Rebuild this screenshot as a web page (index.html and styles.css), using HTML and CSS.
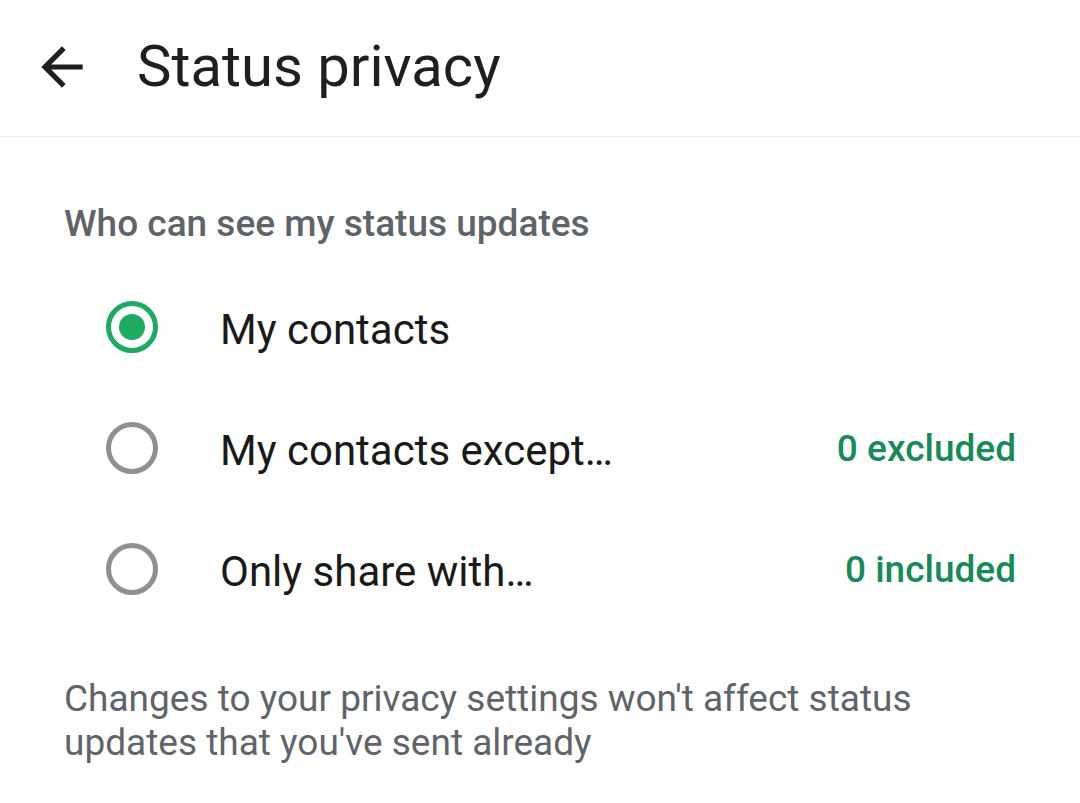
FILE: index.html
```html
<!DOCTYPE html>
<html lang="en">
<head>
<meta charset="utf-8">
<title>Status privacy</title>
<link rel="stylesheet" href="styles.css">
</head>
<body>
<header class="appbar">
  <svg class="back" viewBox="0 0 24 24" width="62" height="62" aria-hidden="true">
    <path d="M20 11H7.83l5.59-5.59L12 4l-8 8 8 8 1.41-1.41L7.83 13H20v-2z" fill="#1f1f1f"/>
  </svg>
  <h1 class="title">Status privacy</h1>
</header>
<main class="content">
  <h2 class="section-title">Who can see my status updates</h2>
  <ul class="options">
    <li class="option">
      <span class="radio checked"><span class="dot"></span></span>
      <span class="label">My contacts</span>
    </li>
    <li class="option">
      <span class="radio"></span>
      <span class="label">My contacts except…</span>
      <span class="count">0 excluded</span>
    </li>
    <li class="option">
      <span class="radio"></span>
      <span class="label">Only share with…</span>
      <span class="count">0 included</span>
    </li>
  </ul>
  <p class="note">Changes to your privacy settings won't affect status updates that you've sent already</p>
</main>
</body>
</html>
```
FILE: styles.css
```css
* { box-sizing: border-box; }
html, body { margin: 0; padding: 0; background: #ffffff; }
body {
  font-family: Roboto, "Noto Sans", "Liberation Sans", sans-serif;
  color: #1f1f1f;
  width: 1080px;
  height: 803px;
  overflow: hidden;
}
.appbar {
  height: 137px;
  display: flex;
  align-items: center;
  padding-left: 31px;
  padding-bottom: 2px;
  border-bottom: 1px solid #ebebeb;
}
.back { display: block; flex: none; }
.title {
  margin: 0 0 0 44px;
  font-size: 58px;
  font-weight: 400;
  line-height: 1.2;
  color: #1f1f1f;
}
.content { padding: 65px 64px 0 64px; }
.section-title {
  margin: 0;
  font-size: 37px;
  font-weight: 500;
  line-height: 1.2;
  color: #5f6469;
}
.options { list-style: none; margin: 20px 0 0 0; padding: 0; }
.option {
  height: 121px;
  display: flex;
  align-items: center;
  padding-left: 42px;
}
.radio {
  width: 52px;
  height: 52px;
  flex: none;
  border-radius: 50%;
  border: 5px solid #8e9194;
  display: flex;
  align-items: center;
  justify-content: center;
}
.radio.checked { border-color: #1daa61; }
.dot { width: 26px; height: 26px; border-radius: 50%; background: #1daa61; }
.label {
  margin-left: 62px;
  padding-top: 6px;
  font-size: 42px;
  color: #1a1a1a;
  flex: 1;
}
.count {
  padding-top: 2px;
  font-size: 37px;
  font-weight: 500;
  color: #188a57;
}
.note {
  margin: 48px 0 0 0;
  font-size: 37px;
  line-height: 44px;
  color: #5f6469;
}
```
